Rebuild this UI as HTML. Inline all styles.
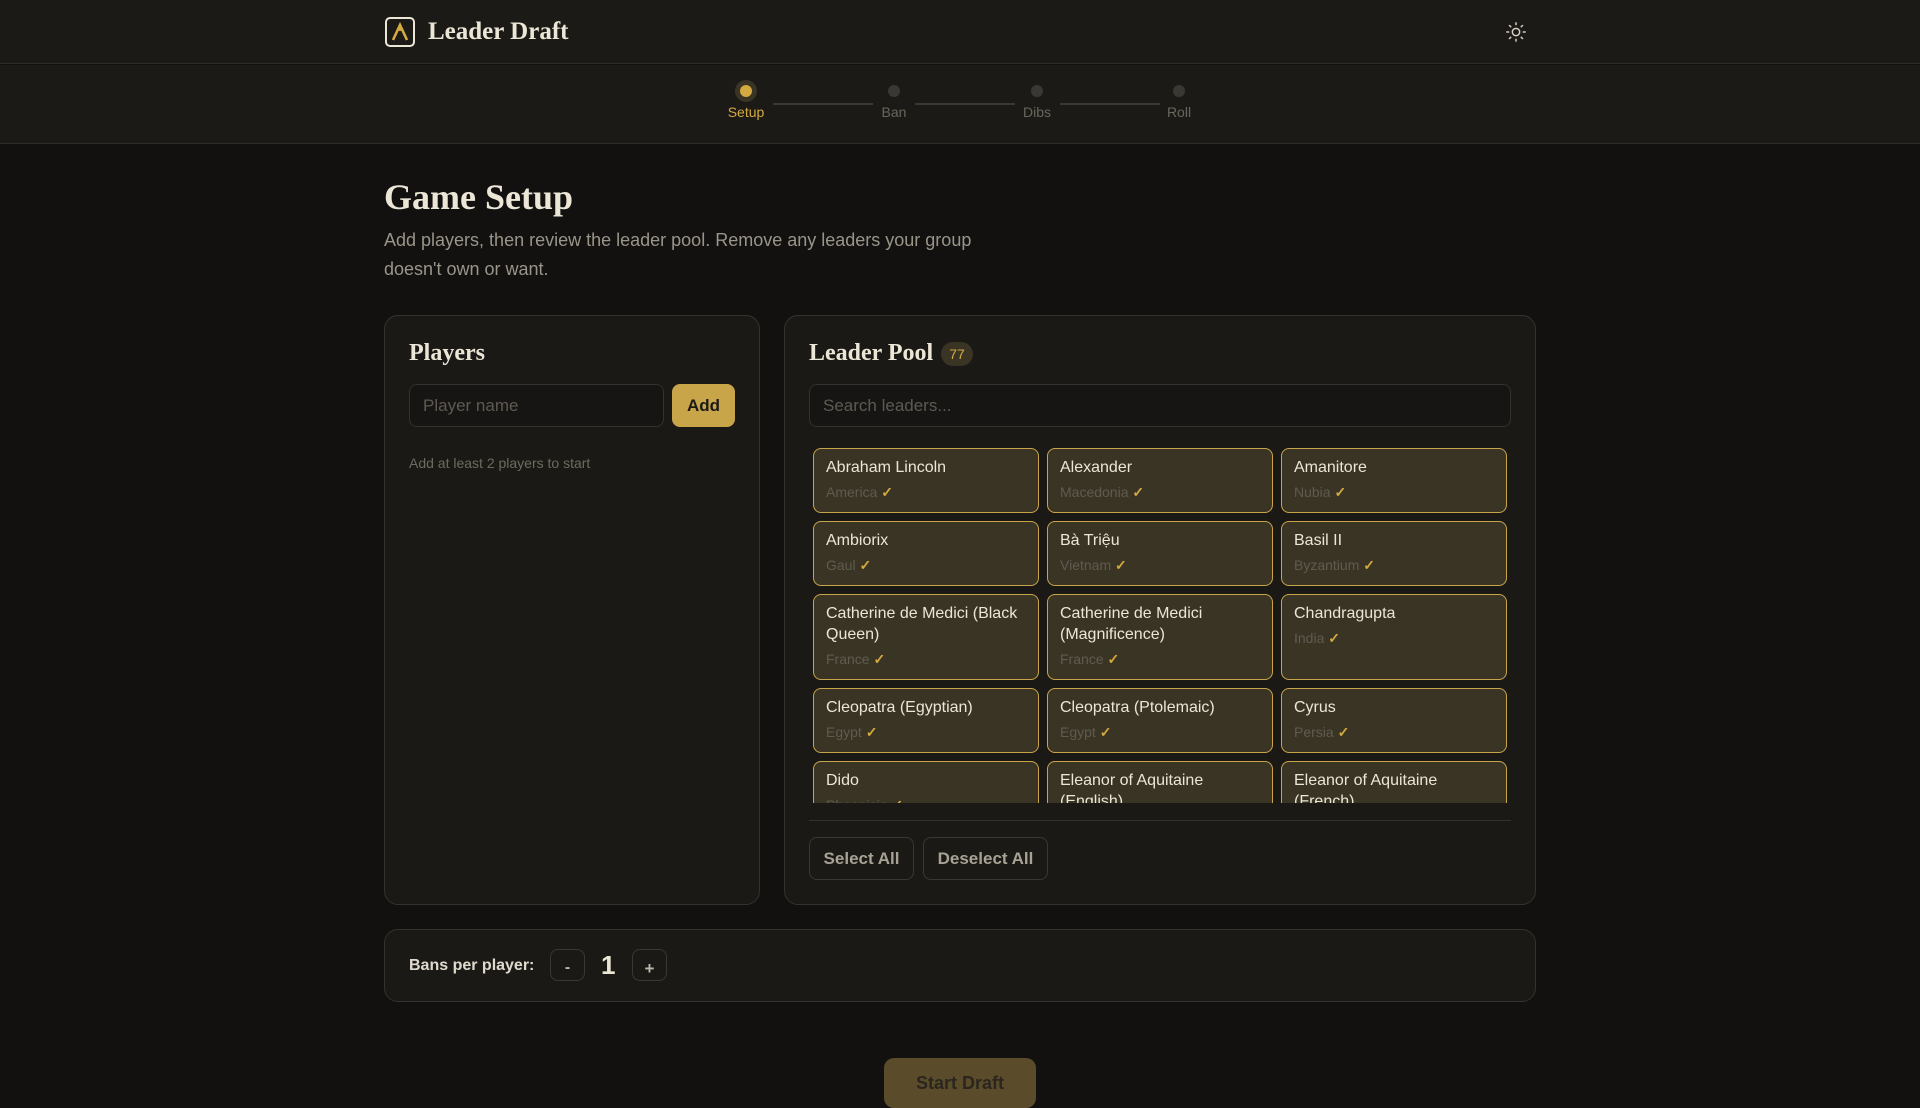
<!DOCTYPE html>
<html><head><meta charset="utf-8"><style>
*{box-sizing:border-box;margin:0;padding:0}
body{width:1920px;height:1080px;overflow:hidden;background:#121110;font-family:"Liberation Sans",sans-serif;color:#e8e2d4;position:relative}
.serif{font-family:"Liberation Serif",serif;font-weight:bold}
.hdr{position:absolute;left:0;top:0;width:1920px;height:64px;background:#1b1a17;border-bottom:1px solid #2e2c27}
.step{position:absolute;left:0;top:65px;width:1920px;height:79px;background:#1b1a17;border-bottom:1px solid #2e2c27}
.dot{position:absolute;width:12px;height:12px;border-radius:50%;background:#3a3833;top:20px}
.lbl{position:absolute;top:38px;font-size:15px;color:#6a665c;transform:translateX(-50%)}
.line{position:absolute;top:38px;height:2px;background:#3a3833}
.card{position:absolute;background:#1a1916;border:1px solid #34322c;border-radius:14px}
.inp{position:absolute;height:43px;border:1px solid #34322c;border-radius:8px;background:#161513;color:#5e5a52;font-size:17px;padding:0 13px;line-height:41px}
.item{position:absolute;width:226px;background:#3a3425;border:1px solid #c9a54a;border-radius:8px;padding:8px 12px}
.item .n{font-size:16px;line-height:21px;color:#ece6d6}
.item .c{font-size:14px;color:#5f5b50;margin-top:5px;line-height:18px}
.item .c b{color:#d4aa40;font-weight:bold}
.btn{position:absolute;border:1px solid #3a3833;border-radius:8px;background:#1a1916;color:#a8a294;font-weight:bold;font-size:17px;text-align:center}
</style></head><body>
<div class="hdr">
 <svg style="position:absolute;left:385px;top:17px" width="30" height="30" viewBox="0 0 30 30"><rect x="1" y="1" width="28" height="28" rx="4" fill="none" stroke="#ece6d6" stroke-width="2"/><path d="M8 23 L15 8 L22 23" fill="none" stroke="#d4aa40" stroke-width="2.6"/><circle cx="15" cy="12" r="2" fill="#d4aa40"/></svg>
 <div class="serif" style="position:absolute;left:428px;top:18px;font-size:25px;color:#ece6d6">Leader Draft</div>
 <svg style="position:absolute;left:1505px;top:21px" width="22" height="22" viewBox="0 0 24 24" fill="none" stroke="#d8d2c4" stroke-width="1.6" stroke-linecap="round"><circle cx="12" cy="12" r="4"/><path d="M12 2v2M12 20v2M4.9 4.9l1.4 1.4M17.7 17.7l1.4 1.4M2 12h2M20 12h2M4.9 19.1l1.4-1.4M17.7 6.3l1.4-1.4"/></svg>
</div>
<div class="step">
 <div style="position:absolute;left:735px;top:15px;width:22px;height:22px;border-radius:50%;background:#3a3425"></div>
 <div class="dot" style="left:740px;background:#d4aa40"></div>
 <div class="lbl" style="left:746px;color:#d4aa40;font-size:14px;top:39px">Setup</div>
 <div class="line" style="left:773px;width:100px"></div>
 <div class="dot" style="left:888px"></div><div class="lbl" style="left:894px;font-size:14px;top:39px">Ban</div>
 <div class="line" style="left:915px;width:100px"></div>
 <div class="dot" style="left:1031px"></div><div class="lbl" style="left:1037px;font-size:14px;top:39px">Dibs</div>
 <div class="line" style="left:1060px;width:100px"></div>
 <div class="dot" style="left:1173px"></div><div class="lbl" style="left:1179px;font-size:14px;top:39px">Roll</div>
</div>
<div class="serif" style="position:absolute;left:384px;top:176px;font-size:36px;color:#ece6d6">Game Setup</div>
<div style="position:absolute;left:384px;top:226px;width:640px;font-size:18px;line-height:29px;color:#9a9589">Add players, then review the leader pool. Remove any leaders your group doesn't own or want.</div>

<div class="card" style="left:384px;top:315px;width:376px;height:590px">
 <div class="serif" style="position:absolute;left:24px;top:24px;font-size:24px;color:#ece6d6">Players</div>
 <div class="inp" style="left:24px;top:68px;width:255px">Player name</div>
 <div style="position:absolute;left:287px;top:68px;width:63px;height:43px;border-radius:8px;background:#c9a54a;color:#1a1916;font-weight:bold;font-size:17px;text-align:center;line-height:43px">Add</div>
 <div style="position:absolute;left:24px;top:139px;font-size:14px;color:#6e6a5e">Add at least 2 players to start</div>
</div>

<div class="card" style="left:784px;top:315px;width:752px;height:590px;overflow:hidden">
 <div class="serif" style="position:absolute;left:24px;top:24px;font-size:24px;color:#ece6d6">Leader Pool</div>
 <div style="position:absolute;left:156px;top:26px;width:32px;height:24px;border-radius:12px;background:#3a3425;color:#d4aa40;font-size:14px;text-align:center;line-height:24px">77</div>
 <div class="inp" style="left:24px;top:68px;width:702px">Search leaders...</div>
 <div style="position:absolute;left:0;top:130px;width:752px;height:357px;overflow:hidden">
  <div class="item" style="left:28px;top:2px;height:65px"><div class="n">Abraham Lincoln</div><div class="c">America <b>✓</b></div></div>
  <div class="item" style="left:262px;top:2px;height:65px"><div class="n">Alexander</div><div class="c">Macedonia <b>✓</b></div></div>
  <div class="item" style="left:496px;top:2px;height:65px"><div class="n">Amanitore</div><div class="c">Nubia <b>✓</b></div></div>
  <div class="item" style="left:28px;top:75px;height:65px"><div class="n">Ambiorix</div><div class="c">Gaul <b>✓</b></div></div>
  <div class="item" style="left:262px;top:75px;height:65px"><div class="n">Bà Triệu</div><div class="c">Vietnam <b>✓</b></div></div>
  <div class="item" style="left:496px;top:75px;height:65px"><div class="n">Basil II</div><div class="c">Byzantium <b>✓</b></div></div>
  <div class="item" style="left:28px;top:148px;height:86px"><div class="n">Catherine de Medici (Black Queen)</div><div class="c">France <b>✓</b></div></div>
  <div class="item" style="left:262px;top:148px;height:86px"><div class="n">Catherine de Medici (Magnificence)</div><div class="c">France <b>✓</b></div></div>
  <div class="item" style="left:496px;top:148px;height:86px"><div class="n">Chandragupta</div><div class="c">India <b>✓</b></div></div>
  <div class="item" style="left:28px;top:242px;height:65px"><div class="n">Cleopatra (Egyptian)</div><div class="c">Egypt <b>✓</b></div></div>
  <div class="item" style="left:262px;top:242px;height:65px"><div class="n">Cleopatra (Ptolemaic)</div><div class="c">Egypt <b>✓</b></div></div>
  <div class="item" style="left:496px;top:242px;height:65px"><div class="n">Cyrus</div><div class="c">Persia <b>✓</b></div></div>
  <div class="item" style="left:28px;top:315px;height:65px"><div class="n">Dido</div><div class="c">Phoenicia <b>✓</b></div></div>
  <div class="item" style="left:262px;top:315px;height:86px"><div class="n">Eleanor of Aquitaine (English)</div><div class="c">England <b>✓</b></div></div>
  <div class="item" style="left:496px;top:315px;height:86px"><div class="n">Eleanor of Aquitaine (French)</div><div class="c">France <b>✓</b></div></div>
 </div>
 <div style="position:absolute;left:24px;top:504px;width:702px;height:1px;background:#34322c"></div>
 <div class="btn" style="left:24px;top:521px;width:105px;height:43px;line-height:41px">Select All</div>
 <div class="btn" style="left:138px;top:521px;width:125px;height:43px;line-height:41px">Deselect All</div>
</div>

<div class="card" style="left:384px;top:929px;width:1152px;height:73px">
 <div style="position:absolute;left:24px;top:27px;font-size:16px;font-weight:bold;color:#e0dace">Bans per player:</div>
 <div class="btn" style="left:165px;top:19px;width:35px;height:32px;font-size:16px;line-height:36px;color:#bdb7a8">-</div>
 <div style="position:absolute;left:216px;top:20px;font-size:26px;font-weight:bold;color:#ece6d6">1</div>
 <div class="btn" style="left:247px;top:19px;width:35px;height:32px;font-size:17px;line-height:38px;color:#bdb7a8">+</div>
</div>
<div style="position:absolute;left:884px;top:1058px;width:152px;height:50px;border-radius:10px;background:#5a4b2b;color:#2a261d;font-weight:bold;font-size:18px;text-align:center;line-height:50px">Start Draft</div>
</body></html>
